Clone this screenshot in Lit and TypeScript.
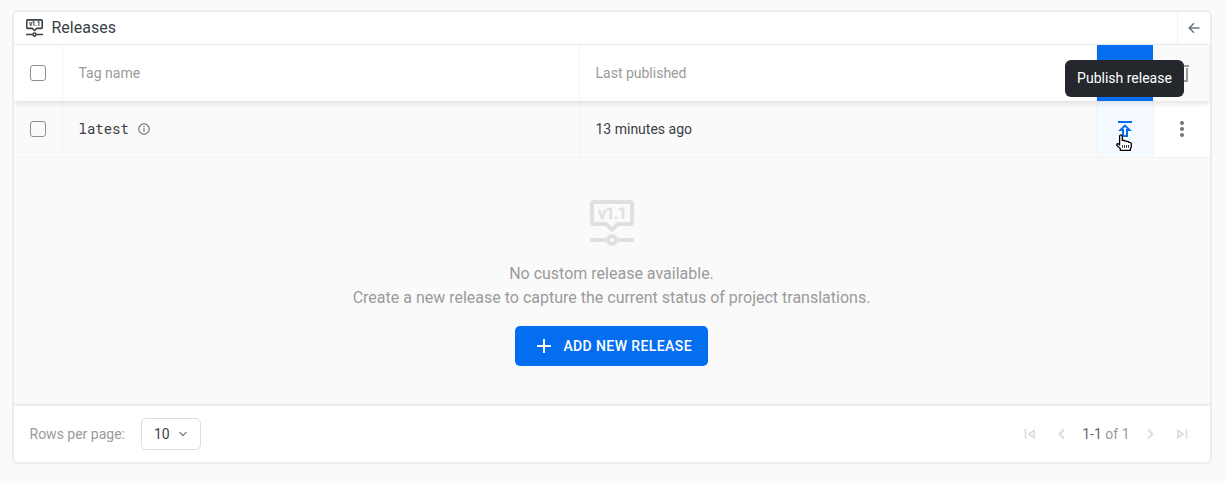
import { LitElement, html, css } from "lit";
import { customElement } from "lit/decorators.js";

@customElement("release-icon")
class ReleaseIcon extends LitElement {
  static styles = css`
    :host { display: block; }
    svg { display: block; width: 100%; height: 100%; }
    path, circle { fill: none; stroke: currentColor; stroke-width: 4; }
    text { font: 700 17px Roboto, sans-serif; letter-spacing: 0; fill: currentColor; }
  `;
  render() {
    return html`<svg viewBox="0 0 44 46">
      <path d="M4 2h36q2 0 2 2v18q0 2-2 2h-12l-6 5.6-6-5.6h-12q-2 0-2-2v-18q0-2 2-2z" />
      <path d="M0 40h17M27 40h17" />
      <circle cx="22" cy="40" r="4" />
      <text x="22.5" y="19" text-anchor="middle" textLength="29.5">v1.1</text>
    </svg>`;
  }
}

@customElement("app-root")
class AppRoot extends LitElement {
  static styles = css`
    :host {
      display: block;
      box-sizing: border-box;
      height: 481px;
      padding: 10px 14px 17px 12px;
      background: #fafafa;
      color: #3a3f45;
      font: 14px/20px Roboto, sans-serif;
    }
    * { box-sizing: border-box; }
    svg { display: block; fill: none; stroke: currentColor; flex: none; }
    .card {
      height: 454px;
      border: 2px solid #ededed;
      border-radius: 6px;
      display: flex;
      flex-direction: column;
      overflow: hidden;
    }
    .title {
      height: 33px;
      display: flex;
      align-items: center;
      background: #fff;
      border-bottom: 1px solid #f0f0f0;
      padding-left: 12px;
      font-size: 16px;
      flex: none;
    }
    .title release-icon { width: 17px; height: 18px; margin: 0 8.5px 0 0; }
    .back {
      margin-left: auto;
      width: 33px;
      height: 32px;
      border-left: 1px solid #f0f0f0;
      display: grid;
      place-items: center;
      color: #6c757d;
    }
    .row {
      display: grid;
      grid-template-columns: 49px 517px 517px 57px 56px;
      height: 56px;
      flex: none;
    }
    .row > div {
      display: flex;
      align-items: center;
      border-right: 1px solid #f3f3f3;
      padding-left: 15.5px;
    }
    .row > div:first-child { padding-left: 16px; }
    .row > div:last-child { border-right: 0; }
    .row > .icon { justify-content: center; padding: 0; }
    .head {
      background: #fff;
      color: #9a9a9a;
      position: relative;
      box-shadow: 0 2px 6px rgba(0, 0, 0, 0.12);
    }
    .head .publish { background: #056ef0; border-color: #fafafa; }
    .head .trash { background: #fafafa; }
    .row.body { height: 57px; border-bottom: 1px solid #f3f3f3; }
    .body .publish { background: #f4faff; color: #056ef0; }
    .body .more { background: #fff; color: #6c757d; }
    .dots { fill: currentColor; stroke: none; }
    .box {
      width: 16px;
      height: 16px;
      border: 1px solid #8f8f8f;
      border-radius: 3px;
      background: #fff;
    }
    .body .box { background: transparent; }
    .tag { font-family: "Roboto Mono", "Liberation Mono", monospace; }
    .info { margin-left: 9px; color: #6c757d; }
    .row > .tip {
      position: absolute;
      left: 1051px;
      top: 15px;
      width: 119px;
      height: 37px;
      padding: 0 0 1px;
      border: 0;
      border-radius: 6px;
      background: #24282d;
      color: #fff;
      justify-content: center;
      white-space: nowrap;
      z-index: 2;
    }
    .cursor { position: absolute; left: 1101px; top: 89px; z-index: 3; }
    .empty {
      flex: 1;
      display: flex;
      flex-direction: column;
      align-items: center;
      padding: 42px 1px 0 0;
      color: #9a9a9a;
      font-size: 16px;
      line-height: 24px;
      text-align: center;
    }
    .empty release-icon { width: 44px; height: 46px; color: #e0e0e0; margin: 0 0 16px 1px; }
    .add {
      margin-top: 16px;
      width: 193px;
      height: 40px;
      border-radius: 5px;
      background: #056ef0;
      color: #fff;
      display: flex;
      align-items: center;
      font-size: 14px;
      font-weight: 500;
      letter-spacing: 0.4px;
      padding-left: 22px;
      gap: 12.4px;
      white-space: nowrap;
    }
    .foot {
      height: 56px;
      flex: none;
      background: #fff;
      box-shadow: 0 -1px 4px rgba(0, 0, 0, 0.12);
      display: flex;
      align-items: center;
      padding: 0 22px 0 15.5px;
      color: #9a9a9a;
    }
    .select {
      margin-left: 16px;
      width: 60px;
      height: 32px;
      border: 1px solid #dcdcdc;
      border-radius: 5px;
      display: flex;
      align-items: center;
      justify-content: space-between;
      padding: 0 13px 0 12px;
      color: #3a3f45;
    }
    .select svg { color: #8a8a8a; }
    .pager { margin-left: auto; display: flex; align-items: center; gap: 20px; color: #dcdcdc; }
    .range { color: #9a9a9a; margin: 0 -5.5px 0 -5.5px; }
    .range b { font-weight: 400; color: #5f6670; }
  `;

  render() {
    return html`<div class="card">
      <div class="title">
        <release-icon></release-icon>Releases
        <div class="back">
          <svg width="12" height="12" stroke-width="1.5"><path d="M11.5 6H1.5M6 1.2L1.2 6 6 10.8" /></svg>
        </div>
      </div>
      <div class="row head">
        <div><span class="box"></span></div>
        <div>Tag name</div>
        <div>Last published</div>
        <div class="icon publish"></div>
        <div class="icon trash">
          <svg width="14" height="18" stroke-width="2"><path d="M0 2h14M5 1h4M2 4v13h10V4" /></svg>
        </div>
        <div class="tip">Publish release</div>
        <svg class="cursor" width="18" height="19" viewBox="0 0 18 19">
          <path fill="#fff" stroke="#000" stroke-width="1.3" stroke-linejoin="round"
            d="M4.6 2.6q0-1.7 1.3-1.7t1.4 1.7v3.8q1.7-.5 2.2.6 1.700-.5 2.300.6 1.700-.5 2.200.8 2.300-.2 2.300 1.700v2.600q-.2 1.300-.9 2.100v1.600H5.300v-1.800L2 11.500q-.6-1.100.2-1.600.8-.4 1.500.2l.9.800z" />
          <path stroke="#222" stroke-width=".9" d="M7.500 11v2.800M9.500 11v2.800M11.500 11v2.800M13.500 11v2.800" />
        </svg>
      </div>
      <div class="row body">
        <div><span class="box"></span></div>
        <div><span class="tag">latest</span>
          <svg class="info" width="12" height="12" stroke-width="1.2"><circle cx="6" cy="6" r="5.2" /><path d="M6 5.2v3.6M6 3v1.3" /></svg>
        </div>
        <div>13 minutes ago</div>
        <div class="icon publish">
          <svg width="16" height="16" stroke-width="2"><path d="M1 1h14" /><path d="M8 4.600l4.500 4.400h-2.500v6H6V9H3.500z" /></svg>
        </div>
        <div class="icon more">
          <svg class="dots" width="4" height="16"><circle cx="2" cy="2" r="2" /><circle cx="2" cy="8" r="2" /><circle cx="2" cy="14" r="2" /></svg>
        </div>
      </div>
      <div class="empty">
        <release-icon></release-icon>
        <div>No custom release available.</div>
        <div>Create a new release to capture the current status of project translations.</div>
        <div class="add">
          <svg width="14" height="14" stroke-width="2"><path d="M7 0v14M0 7h14" /></svg>ADD NEW RELEASE
        </div>
      </div>
      <div class="foot">
        Rows per page:
        <div class="select">10 <svg width="8" height="6" stroke-width="1.4"><path d="M.5 1L4 4.500 7.500 1" /></svg></div>
        <div class="pager">
          <svg width="12" height="12" stroke-width="1.6"><path d="M1.500 1v10M10 2.500v7L5 6z" /></svg>
          <svg width="12" height="12" stroke-width="1.8"><path d="M8 1.500L3.500 6 8 10.500" /></svg>
          <span class="range"><b>1-1</b> of 1</span>
          <svg width="12" height="12" stroke-width="1.8"><path d="M4 1.500L8.500 6 4 10.500" /></svg>
          <svg width="12" height="12" stroke-width="1.6"><path d="M10.500 1v10M2 2.500v7L7 6z" /></svg>
        </div>
      </div>
    </div>`;
  }
}
